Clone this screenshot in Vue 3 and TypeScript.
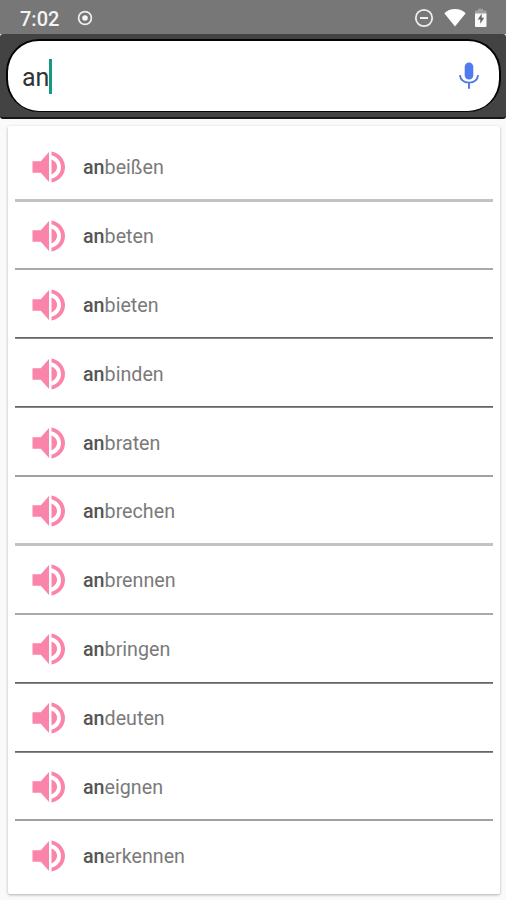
<script setup lang="ts">
interface Entry {
  rest: string
  line: 'light' | 'medium' | 'dark' | 'soft' | 'none'
}

const query = 'an'
const entries: Entry[] = [
  { rest: 'beißen', line: 'light' },
  { rest: 'beten', line: 'medium' },
  { rest: 'bieten', line: 'dark' },
  { rest: 'binden', line: 'dark' },
  { rest: 'braten', line: 'soft' },
  { rest: 'brechen', line: 'light' },
  { rest: 'brennen', line: 'medium' },
  { rest: 'bringen', line: 'dark' },
  { rest: 'deuten', line: 'dark' },
  { rest: 'eignen', line: 'soft' },
  { rest: 'erkennen', line: 'none' },
]
</script>

<template>
  <div class="screen">
    <header class="status">
      <span class="clock">7:02</span>
      <svg class="record" width="16" height="16" viewBox="0 0 16 16">
        <circle cx="8" cy="8" r="6.4" fill="none" stroke="#eee" stroke-width="1.7" />
        <circle cx="8" cy="8" r="2.8" fill="#f5f5f5" />
      </svg>
      <svg class="dnd" width="20" height="20" viewBox="0 0 20 20">
        <circle cx="10" cy="10" r="8.2" fill="none" stroke="#eee" stroke-width="1.8" />
        <path d="M6 10h8" stroke="#eee" stroke-width="2" />
      </svg>
      <svg class="wifi" width="24" height="20" viewBox="0 0 24 20">
        <path d="M12 18.500 1.300 5.3Q5.5 1 12 1t10.700 4.3z" fill="#fff" />
      </svg>
      <svg class="battery" width="14" height="20" viewBox="0 0 14 20">
        <path d="M1 6V3.5Q1 2.5 2 2.5h2V.8h5v1.7h2.500q1 0 1 1V6z" fill="#a0a0a0" />
        <path d="M1 5.5h11.500V18q0 1-1 1H2q-1 0-1-1z" fill="#fafafa" />
        <path d="M7.7 5.5 3.8 11.500h2.500v4.300l3.900-6H7.700z" fill="#666" />
      </svg>
    </header>

    <div class="search">
      <div class="field">
        <span class="query">{{ query }}</span>
        <span class="caret"></span>
        <svg class="mic" width="22" height="28" viewBox="0 0 22 28">
          <rect x="6.700" y="0.500" width="8.600" height="17" rx="4.300" fill="#507af0" />
          <path d="M1.900 13.200C2.500 18 6 20.600 11 20.600s8.500-2.600 9.100-7.400M11 20.600v6.200" fill="none" stroke="#4c78e4" stroke-width="1.900" />
        </svg>
      </div>
    </div>

    <main class="card">
      <ul class="list">
        <li v-for="entry in entries" :key="entry.rest" class="item">
          <svg class="speaker" width="34" height="32" viewBox="0 0 34 32">
            <g fill="#fa84aa">
              <path d="M.5 10.300h8.300L17 1v30l-8.200-9.300H.5z" />
              <path d="M19.500 8.600Q25 11 25 16t-5.500 7.400z" />
              <path d="M19.500.4C27.500 2 33 8.300 33 16s-5.500 14-13.500 15.600v-3.800C25.500 26 29 21.500 29 16S25.500 6 19.500 4.200z" />
            </g>
          </svg>
          <span class="word"><b>{{ query }}</b>{{ entry.rest }}</span>
          <span v-if="entry.line !== 'none'" class="line" :class="entry.line"></span>
        </li>
      </ul>
    </main>
  </div>
</template>

<style>
body {
  margin: 0;
  background: #fafafa;
}
</style>

<style scoped>
.screen {
  display: flex;
  flex-direction: column;
  height: 900px;
  overflow: hidden;
  background: #fafafa;
  font-family: Roboto, sans-serif;
}
.status {
  display: flex;
  align-items: center;
  flex: none;
  box-sizing: border-box;
  height: 34px;
  padding: 1px 18px 0 20px;
  background: #777;
}
.clock {
  width: 56.5px;
  padding-top: 2px;
  color: #f4f4f4;
  font-size: 20px;
  font-weight: 500;
  line-height: 32px;
}
.record {
  margin-right: auto;
}
.wifi {
  margin: 0 7px 0 9px;
}
.search {
  flex: none;
  box-sizing: border-box;
  height: 85px;
  padding: 5px 5px 5px 6px;
  border-bottom: 2px solid #161616;
  border-radius: 3px;
  background: #434343;
}
.field {
  display: flex;
  align-items: center;
  box-sizing: border-box;
  height: 73px;
  padding: 0 19px 0 14px;
  border: 2px solid #050505;
  border-bottom-width: 1px;
  border-radius: 33px;
  background: #fff;
}
.query {
  padding-top: 4px;
  color: #333;
  font-size: 25px;
  line-height: 34px;
}
.caret {
  width: 2.5px;
  height: 35px;
  margin-right: auto;
  background: #16997f;
}
.card {
  flex: none;
  box-sizing: border-box;
  height: 768px;
  margin: 7px 6px 0 8px;
  padding: 7px 7px 0;
  border-radius: 2px;
  background: #fff;
  box-shadow: 0 1px 3px rgba(0, 0, 0, 0.3);
}
.list {
  margin: 0;
  padding: 0;
  list-style: none;
}
.item {
  display: grid;
  grid-template-columns: 50px 1fr;
  grid-template-rows: 1fr 3px;
  align-items: center;
  box-sizing: border-box;
  height: 68.9px;
  padding: 2px 0 0 17px;
}
.speaker {
  display: block;
}
.word {
  padding: 2px 0 0 1px;
  color: #7a7a7a;
  font-size: 19.7px;
  line-height: 28px;
}
.word b {
  color: #555;
  font-weight: 500;
}
.line {
  grid-column: 1 / -1;
  grid-row: 2;
  align-self: center;
  height: 3px;
  margin-left: -17px;
}
.light {
  background: #c3c3c3;
}
.medium {
  height: 2px;
  background: #a9a9a9;
}
.dark {
  height: 2px;
  background: linear-gradient(#666 50%, #888 50%);
}
.soft {
  height: 2px;
  background: #a0a0a0;
}
</style>
